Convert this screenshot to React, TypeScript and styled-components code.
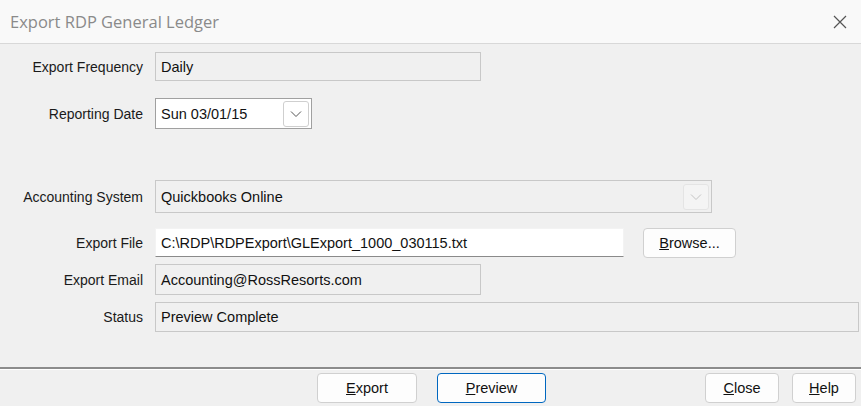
import React from 'react';
import styled, {createGlobalStyle} from 'styled-components';

const Global = createGlobalStyle`
body { margin: 0; background: #f0f0f0; font-family: "Liberation Sans", Arial, sans-serif; }
`;

const Window = styled.div`
width: 861px;
height: 406px;
display: flex;
flex-direction: column;
background: #f0f0f0;
overflow: hidden;
`;

const TitleBar = styled.div`
height: 43px;
display: flex;
align-items: center;
justify-content: space-between;
padding: 0 14px 0 10px;
background: #f9f9f9;
border-bottom: 1px solid #d8d8d8;
color: #8a8a8a;
font-family: "Open Sans", sans-serif;
font-size: 16.5px;
`;

const Body = styled.div`
flex: 1;
padding: 8px 0 0 0;
`;

const Row = styled.div<{$mt: number; $h: number}>`
display: flex;
align-items: center;
margin-top: ${p => p.$mt}px;
height: ${p => p.$h}px;
`;

const Label = styled.div`
width: 143px;
text-align: right;
padding-right: 12px;
font-size: 14px;
color: #1a1a1a;
`;

const Field = styled.div<{$w: number; $white?: boolean}>`
box-sizing: border-box;
width: ${p => p.$w}px;
height: 100%;
display: flex;
align-items: center;
justify-content: space-between;
padding: 0 2px 0 5px;
background: ${p => (p.$white ? '#fff' : '#f0f0f0')};
border: 1px solid ${p => (p.$white ? '#f3f3f3' : '#c8c8c8')};
border-bottom-color: ${p => (p.$white ? '#8a8a8a' : '#c8c8c8')};
font-size: 14.5px;
color: #111;
`;

const DropBtn = styled.div<{$faint?: boolean}>`
width: 24px;
height: 24px;
display: flex;
align-items: center;
justify-content: center;
border: 1px solid ${p => (p.$faint ? '#e4e4e4' : '#cfcfcf')};
border-radius: 3px;
background: ${p => (p.$faint ? '#f4f4f4' : '#fff')};
color: ${p => (p.$faint ? '#c4c4c4' : '#555')};
`;

const Button = styled.button<{$w: number; $primary?: boolean}>`
box-sizing: border-box;
width: ${p => p.$w}px;
height: 30px;
background: #fdfdfd;
border: 1px solid ${p => (p.$primary ? '#0067c0' : '#d0d0d0')};
border-radius: 4px;
font-family: "Liberation Sans", Arial, sans-serif;
font-size: 14.5px;
color: #111;
padding: 0;
u { text-decoration: underline; }
`;

const Footer = styled.div`
height: 36px;
border-top: 2px solid #8c8c8c;
box-shadow: inset 0 1px 0 #fff;
display: flex;
align-items: center;
padding-top: 1px;
`;

const Spacer = styled.div<{$w: number}>`
width: ${p => p.$w}px;
flex: none;
`;

const Chevron = () => (
  <svg width="12" height="8" viewBox="0 0 12 8"><path d="M1 1.5 6 6.5 11 1.5" fill="none" stroke="currentColor" strokeWidth="1"/></svg>
);

export default function App() {
  return (
    <Window>
      <Global/>
      <TitleBar>
        <span>Export RDP General Ledger</span>
        <svg width="14" height="14" viewBox="0 0 14 14"><path d="M1 1 13 13M13 1 1 13" stroke="#555" strokeWidth="1.2"/></svg>
      </TitleBar>
      <Body>
        <Row $mt={0} $h={29}><Label>Export Frequency</Label><Field $w={326}>Daily</Field></Row>
        <Row $mt={17} $h={31}><Label>Reporting Date</Label><Field $w={157} $white style={{borderColor: '#a0a0a0'}}>Sun 03/01/15<DropBtn><Chevron/></DropBtn></Field></Row>
        <Row $mt={51} $h={33}><Label>Accounting System</Label><Field $w={557}>Quickbooks Online<DropBtn $faint><Chevron/></DropBtn></Field></Row>
        <Row $mt={15} $h={29}>
          <Label>Export File</Label>
          <Field $w={469} $white>C:\RDP\RDPExport\GLExport_1000_030115.txt</Field>
          <Spacer $w={19}/>
          <Button $w={93}><u>B</u>rowse...</Button>
        </Row>
        <Row $mt={7} $h={31}><Label>Export Email</Label><Field $w={326}>Accounting@RossResorts.com</Field></Row>
        <Row $mt={7} $h={30}><Label>Status</Label><Field $w={704}>Preview Complete</Field></Row>
      </Body>
      <Footer>
        <Spacer $w={317}/>
        <Button $w={100}><u>E</u>xport</Button>
        <Spacer $w={20}/>
        <Button $w={109} $primary><u>P</u>review</Button>
        <Spacer $w={159}/>
        <Button $w={74}><u>C</u>lose</Button>
        <Spacer $w={13}/>
        <Button $w={64}><u>H</u>elp</Button>
      </Footer>
    </Window>
  );
}
